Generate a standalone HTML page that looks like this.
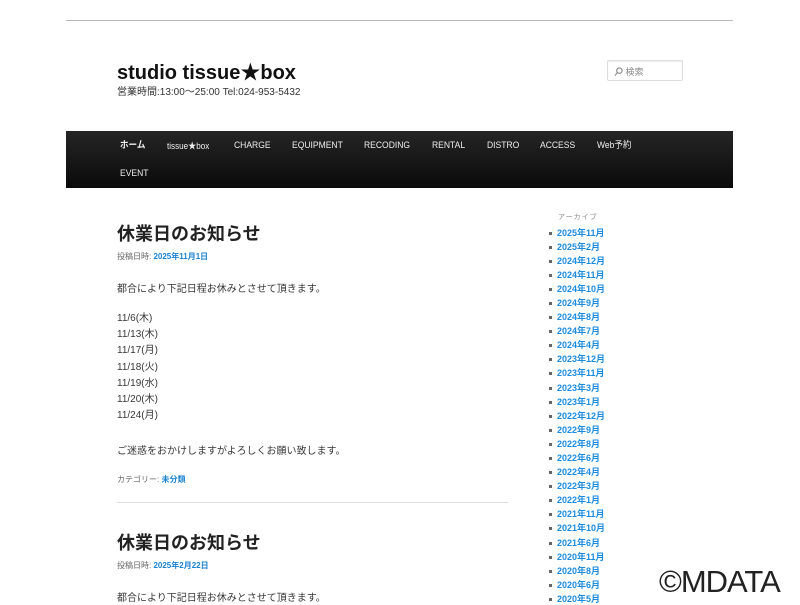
<!DOCTYPE html>
<html><head><meta charset="utf-8"><style>
*{margin:0;padding:0;box-sizing:border-box}
body{width:800px;height:600px;overflow:hidden;background:#fff;font-family:"Liberation Sans","Noto Sans CJK JP",sans-serif;color:#373737;position:relative}
.a{position:absolute;white-space:nowrap}
.topline{position:absolute;left:66px;top:20px;width:667px;height:1px;background:#bbb}
.nav{position:absolute;left:66px;top:131px;width:667px;height:57px;background:linear-gradient(#252525,#0a0a0a)}
.nav span{position:absolute;color:#eee;font-size:9.5px;line-height:12px;height:12px;transform:scaleX(.9);transform-origin:left}
.side li{position:absolute;left:557px;font-size:9px;line-height:12px;font-weight:bold;color:#1b8be0;list-style:none}
.side li:before{content:"";position:absolute;left:-8px;top:5px;width:3px;height:3px;background:#666}
.p{font-size:10px;color:#373737}
.blue{color:#1982d1;font-weight:bold}
</style></head><body>
<div class="topline"></div>
<div class="a" style="left:117px;top:56px;font-size:20px;font-weight:bold;color:#111">studio tissue★box</div>
<div class="a" style="left:117px;top:83px;font-size:10px;color:#333">営業時間:13:00～25:00 Tel:024-953-5432</div>
<div class="a" style="left:607px;top:60px;width:76px;height:21px;border:1px solid #ddd;border-radius:2px;box-shadow:inset 0 1px 1px rgba(0,0,0,.08);font-size:9px;color:#888;padding:4px 0 0 6px"><svg width="9" height="9" viewBox="0 0 10 10" style="vertical-align:-1px"><circle cx="6" cy="4" r="3" fill="none" stroke="#888" stroke-width="1.2"/><path d="M4 6L1 9.5" stroke="#888" stroke-width="1.2"/></svg> 検索</div>
<div class="nav">
<span style="left:54px;top:9px;font-weight:bold">ホーム</span>
<span style="left:101px;top:9px;font-size:9px">tissue★box</span>
<span style="left:168px;top:9px">CHARGE</span>
<span style="left:226px;top:9px">EQUIPMENT</span>
<span style="left:298px;top:9px">RECODING</span>
<span style="left:366px;top:9px">RENTAL</span>
<span style="left:421px;top:9px">DISTRO</span>
<span style="left:474px;top:9px">ACCESS</span>
<span style="left:531px;top:9px">Web予約</span>
<span style="left:54px;top:37px">EVENT</span>
</div>

<div class="a" style="left:117px;top:220px;font-size:18px;font-weight:bold;color:#222">休業日のお知らせ</div>
<div class="a" style="left:117px;top:251px;font-size:8px;color:#666">投稿日時: <span class="blue">2025年11月1日</span></div>
<div class="a p" style="left:117px;top:280px">都合により下記日程お休みとさせて頂きます。</div>
<div class="a p" style="left:117px;top:311px;line-height:16.2px">11/6(木)<br>11/13(木)<br>11/17(月)<br>11/18(火)<br>11/19(水)<br>11/20(木)<br>11/24(月)</div>
<div class="a p" style="left:117px;top:442px">ご迷惑をおかけしますがよろしくお願い致します。</div>
<div class="a" style="left:117px;top:474px;font-size:8px;color:#666">カテゴリー: <span class="blue">未分類</span></div>
<div class="a" style="left:117px;top:502px;width:391px;height:1px;background:#ddd"></div>
<div class="a" style="left:117px;top:529px;font-size:18px;font-weight:bold;color:#222">休業日のお知らせ</div>
<div class="a" style="left:117px;top:560px;font-size:8px;color:#666">投稿日時: <span class="blue">2025年2月22日</span></div>
<div class="a p" style="left:117px;top:589px">都合により下記日程お休みとさせて頂きます。</div>

<div class="a" style="left:558px;top:212px;font-size:7px;color:#888;letter-spacing:1px">アーカイブ</div>
<ul class="side">
<li style="top:227px">2025年11月</li><li style="top:241px">2025年2月</li><li style="top:255px">2024年12月</li><li style="top:269px">2024年11月</li><li style="top:283px">2024年10月</li><li style="top:297px">2024年9月</li><li style="top:311px">2024年8月</li><li style="top:325px">2024年7月</li><li style="top:339px">2024年4月</li><li style="top:353px">2023年12月</li><li style="top:367px">2023年11月</li><li style="top:382px">2023年3月</li><li style="top:396px">2023年1月</li><li style="top:410px">2022年12月</li><li style="top:424px">2022年9月</li><li style="top:438px">2022年8月</li><li style="top:452px">2022年6月</li><li style="top:466px">2022年4月</li><li style="top:480px">2022年3月</li><li style="top:494px">2022年1月</li><li style="top:508px">2021年11月</li><li style="top:522px">2021年10月</li><li style="top:537px">2021年6月</li><li style="top:551px">2020年11月</li><li style="top:565px">2020年8月</li><li style="top:579px">2020年6月</li><li style="top:593px">2020年5月</li>
</ul>
<div class="a" style="left:659px;top:564px;font-size:31px;letter-spacing:-1px;color:#222">©MDATA</div>
</body></html>
